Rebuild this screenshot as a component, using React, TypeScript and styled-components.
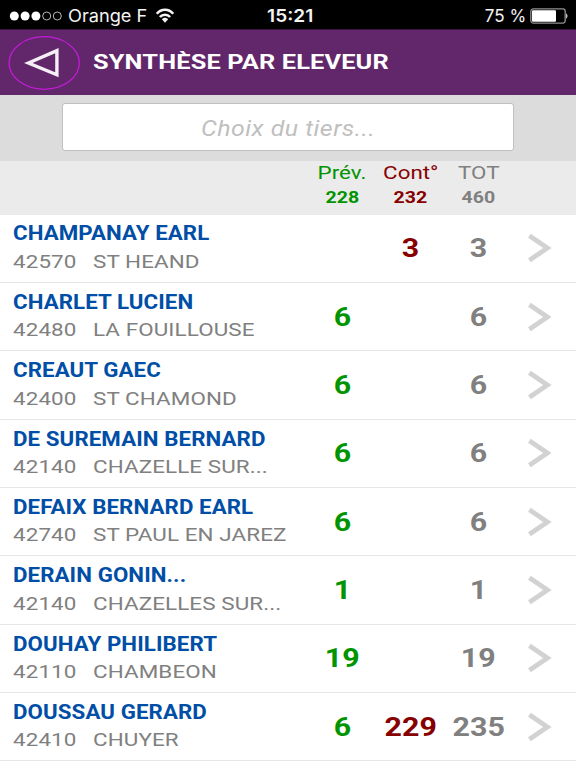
import React from 'react';
import styled, { createGlobalStyle, css } from 'styled-components';

const GlobalStyle = createGlobalStyle`
  * { box-sizing: border-box; }
  html, body { margin: 0; padding: 0; background: #fff; }
  body { overflow: hidden; }
`;

type Tone = 'planned' | 'checked' | 'total';
const tones: Record<Tone, string> = {
  planned: '#009400',
  checked: '#870000',
  total: '#808080',
};

const wide = (ratio: number, origin: 'left' | 'center' | 'right') => css`
  display: inline-block;
  white-space: pre;
  transform: scaleX(${ratio});
  transform-origin: ${origin} center;
`;

const Screen = styled.div`
  display: flex;
  flex-direction: column;
  width: 576px;
  height: 768px;
  overflow: hidden;
  background: #fff;
  font-family: Roboto, sans-serif;
`;

const StatusBar = styled.div`
  flex: none;
  display: grid;
  grid-template-columns: 1fr auto 1fr;
  align-items: center;
  height: 29px;
  padding: 3px 8px 0 9px;
  background: #000;
  color: #f4f4f4;
  font-family: Inter, sans-serif;
`;

const StatusGroup = styled.div<{ $end?: boolean }>`
  display: flex;
  align-items: center;
  justify-content: ${(p) => (p.$end ? 'flex-end' : 'flex-start')};
`;

const Carrier = styled.span`
  ${wide(1.045, 'left')}
  width: 87px;
  margin-left: 5px;
  font-size: 17.4px;
  line-height: 24px;
`;

const Clock = styled.span`
  ${wide(1.09, 'center')}
  margin-left: 3px;
  font-size: 17.5px;
  font-weight: 600;
  line-height: 24px;
`;

const Charge = styled.span`
  ${wide(0.98, 'right')}
  margin-right: 4px;
  font-size: 17.4px;
  line-height: 24px;
`;

const Header = styled.header`
  flex: none;
  display: flex;
  align-items: center;
  gap: 13px;
  height: 66px;
  padding-left: 8px;
  border-top: 1px solid #3c1542;
  background: #61276a;
`;

const BackButton = styled.button`
  display: flex;
  width: 72px;
  height: 54px;
  margin-top: 1px;
  padding: 0;
  border: 0;
  background: none;
`;

const Title = styled.h1`
  ${wide(1.3, 'left')}
  margin: 0;
  color: #fff;
  font-size: 19.5px;
  font-weight: 700;
  line-height: 26px;
  letter-spacing: 0.12px;
`;

const SearchBar = styled.div`
  flex: none;
  display: flex;
  justify-content: center;
  height: 66px;
  padding-top: 8px;
  background: #dcdcdc;
`;

const SearchField = styled.div`
  display: flex;
  align-items: center;
  justify-content: center;
  width: 452px;
  height: 48px;
  border: 1px solid #c0c0c0;
  border-radius: 3px;
  background: #fff;
`;

const Placeholder = styled.span`
  ${wide(1.16, 'center')}
  padding-top: 2px;
  color: #bfbfbf;
  font-size: 21.5px;
  font-style: italic;
  letter-spacing: 0.4px;
`;

const rowGrid = css`
  display: grid;
  grid-template-columns: 308px 68.5px 68px 68px 1fr;
`;

const Totals = styled.div`
  ${rowGrid}
  flex: none;
  height: 53.6px;
  background: #ebebeb;
`;

const TotalCell = styled.div<{ $tone: Tone }>`
  grid-column: ${(p) => ({ planned: 2, checked: 3, total: 4 })[p.$tone]};
  display: flex;
  flex-direction: column;
  align-items: center;
  color: ${(p) => tones[p.$tone]};
`;

const TotalLabel = styled.span`
  ${wide(1.165, 'center')}
  font-size: 19.2px;
  line-height: 24px;
`;

const TotalValue = styled.span`
  ${wide(1.17, 'center')}
  font-size: 16.7px;
  font-weight: 700;
  line-height: 25px;
`;

const Row = styled.div`
  ${rowGrid}
  flex: none;
  align-items: center;
  height: 68.37px;
  border-bottom: 1px solid #e6e6e6;
  background: #fff;
`;

const Farmer = styled.div`
  display: flex;
  flex-direction: column;
  align-items: flex-start;
  padding: 0 0 1.2px 13px;
`;

const Name = styled.span`
  ${wide(1.155, 'left')}
  color: #004ea6;
  font-size: 19.3px;
  font-weight: 700;
  line-height: 27.5px;
  letter-spacing: 0.08px;
`;

const Place = styled.div`
  display: grid;
  grid-template-columns: 80px auto;
  color: #808080;
  font-size: 19.2px;
  line-height: 27px;
`;

const PlaceText = styled.span`
  ${wide(1.168, 'left')}
  letter-spacing: 0.08px;
`;

const Count = styled.div<{ $tone: Tone }>`
  display: flex;
  justify-content: center;
  color: ${(p) => tones[p.$tone]};
`;

const CountValue = styled.span`
  ${wide(1.15, 'center')}
  font-size: 26.4px;
  font-weight: 700;
  line-height: 32px;
`;

const Chevron = styled.svg`
  display: block;
  margin-left: 13px;
`;

const SignalDots = () => (
  <svg width="54" height="12" viewBox="0 0 54 12" fill="none">
    {[5.3, 16.1, 26.9].map((x) => (
      <circle key={x} cx={x} cy="6" r="4.5" fill="#fff" />
    ))}
    {[37.7, 48.3].map((x) => (
      <circle key={x} cx={x} cy="6" r="4" stroke="#ccc" strokeWidth="0.9" />
    ))}
  </svg>
);

const Wifi = () => (
  <svg width="20" height="16" viewBox="0 0 20 16" fill="none" stroke="#f4f4f4" strokeWidth="2.5">
    <path d="M1.8 5.7C6.2 0.4 13.8 0.4 18.2 5.7" />
    <path d="M4.9 9.1C7.5 5.8 12.5 5.8 15.1 9.1" />
    <path d="M10 14.7 6.9 11.2C8.6 9.2 11.4 9.2 13.1 11.2Z" fill="#f4f4f4" stroke="none" />
  </svg>
);

const Battery = () => (
  <svg width="38" height="16" viewBox="0 0 38 16" fill="none">
    <rect x="0.8" y="0.9" width="34.4" height="14.2" rx="2.5" stroke="#909090" strokeWidth="1.3" />
    <rect x="2" y="2.2" width="24" height="11.6" rx="1" fill="#fff" />
    <path d="M36 5.5C38 6 38 10 36 10.5Z" fill="#bbb" />
  </svg>
);

const BackIcon = () => (
  <svg width="72" height="54" viewBox="0 0 72 54" fill="none">
    <ellipse cx="36.2" cy="27" rx="35.1" ry="26.3" stroke="#c21bd6" strokeWidth="1.3" />
    <path d="M20.4 27 48.9 14.7V38.8Z" stroke="#f5eff6" strokeWidth="3.4" />
  </svg>
);

interface Entry {
  name: string;
  zip: string;
  town: string;
  planned?: number;
  checked?: number;
  total: number;
}

const entries: Entry[] = [
  { name: 'CHAMPANAY EARL', zip: '42570', town: 'ST HEAND', checked: 3, total: 3 },
  { name: 'CHARLET LUCIEN', zip: '42480', town: 'LA FOUILLOUSE', planned: 6, total: 6 },
  { name: 'CREAUT GAEC', zip: '42400', town: 'ST CHAMOND', planned: 6, total: 6 },
  { name: 'DE SUREMAIN BERNARD', zip: '42140', town: 'CHAZELLE SUR...', planned: 6, total: 6 },
  { name: 'DEFAIX BERNARD EARL', zip: '42740', town: 'ST PAUL EN JAREZ', planned: 6, total: 6 },
  { name: 'DERAIN GONIN...', zip: '42140', town: 'CHAZELLES SUR...', planned: 1, total: 1 },
  { name: 'DOUHAY PHILIBERT', zip: '42110', town: 'CHAMBEON', planned: 19, total: 19 },
  { name: 'DOUSSAU GERARD', zip: '42410', town: 'CHUYER', planned: 6, checked: 229, total: 235 },
];

const columns: { tone: Tone; label: string; value: number }[] = [
  { tone: 'planned', label: 'Prév.', value: 228 },
  { tone: 'checked', label: 'Cont°', value: 232 },
  { tone: 'total', label: 'TOT', value: 460 },
];

export default function App() {
  return (
    <Screen>
      <GlobalStyle />
      <StatusBar>
        <StatusGroup>
          <SignalDots />
          <Carrier>Orange F</Carrier>
          <Wifi />
        </StatusGroup>
        <Clock>15:21</Clock>
        <StatusGroup $end>
          <Charge>75 %</Charge>
          <Battery />
        </StatusGroup>
      </StatusBar>
      <Header>
        <BackButton aria-label="Retour">
          <BackIcon />
        </BackButton>
        <Title>SYNTHÈSE PAR ELEVEUR</Title>
      </Header>
      <SearchBar>
        <SearchField>
          <Placeholder>Choix du tiers...</Placeholder>
        </SearchField>
      </SearchBar>
      <Totals>
        {columns.map((c) => (
          <TotalCell key={c.tone} $tone={c.tone}>
            <TotalLabel>{c.label}</TotalLabel>
            <TotalValue>{c.value}</TotalValue>
          </TotalCell>
        ))}
      </Totals>
      {entries.map((e) => (
        <Row key={e.name}>
          <Farmer>
            <Name>{e.name}</Name>
            <Place>
              <PlaceText>{e.zip}</PlaceText>
              <PlaceText>{e.town}</PlaceText>
            </Place>
          </Farmer>
          {columns.map(({ tone }) => (
            <Count key={tone} $tone={tone}>
              <CountValue>{e[tone]}</CountValue>
            </Count>
          ))}
          <Chevron width="26" height="30" viewBox="0 0 26 30" fill="none">
            <path d="M3.4 2.8 21.4 15 3.4 27.2" stroke="#d2d2d2" strokeWidth="4.8" />
          </Chevron>
        </Row>
      ))}
    </Screen>
  );
}
